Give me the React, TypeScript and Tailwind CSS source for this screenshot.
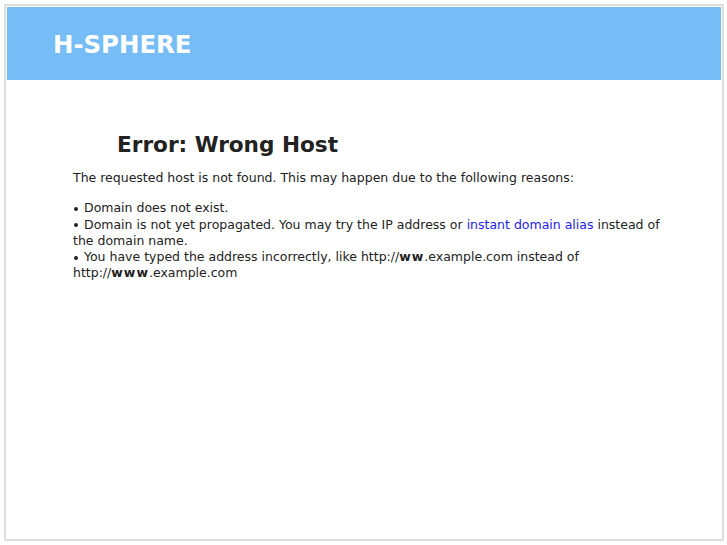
const font = { fontFamily: '"DejaVu Sans", Verdana, sans-serif' };

const Bullet = () => (
  <span className="mr-[6px] ml-[1px] inline-block h-[4px] w-[4px] rounded-full bg-[#222] align-middle" />
);

export default function App() {
  return (
    <div className="h-[545px] w-[727px] bg-white p-[4px]" style={font}>
      <div className="h-[537px] w-[720px] border-2 border-[#dedede] p-px">
        <div className="flex h-[73px] items-center bg-[#76bdf7] pl-[46px] pt-[3px]">
          <span className="text-[24.4px] font-bold text-white">H-SPHERE</span>
        </div>
        <div className="pl-[66px] pr-[50px] text-[12.5px] leading-[16.25px] text-[#222]">
          <h1 className="mt-[51px] pl-[44px] text-[21.6px] font-bold leading-[28px] text-[#222]">
            Error: Wrong Host
          </h1>
          <p className="mt-[11px]">
            The requested host is not found. This may happen due to the following reasons:
          </p>
          <div className="mt-[14px]">
            <div>
              <Bullet />
              Domain does not exist.
            </div>
            <div>
              <Bullet />
              Domain is not yet propagated. You may try the IP address or{" "}
              <a className="text-[#2323ee]">instant domain alias</a> instead of the domain name.
            </div>
            <div>
              <Bullet />
              You have typed the address incorrectly, like http://<b className="tracking-[1px]">ww</b>.example.com instead of
              http://<b className="tracking-[1px]">www</b>.example.com
            </div>
          </div>
        </div>
      </div>
    </div>
  );
}
